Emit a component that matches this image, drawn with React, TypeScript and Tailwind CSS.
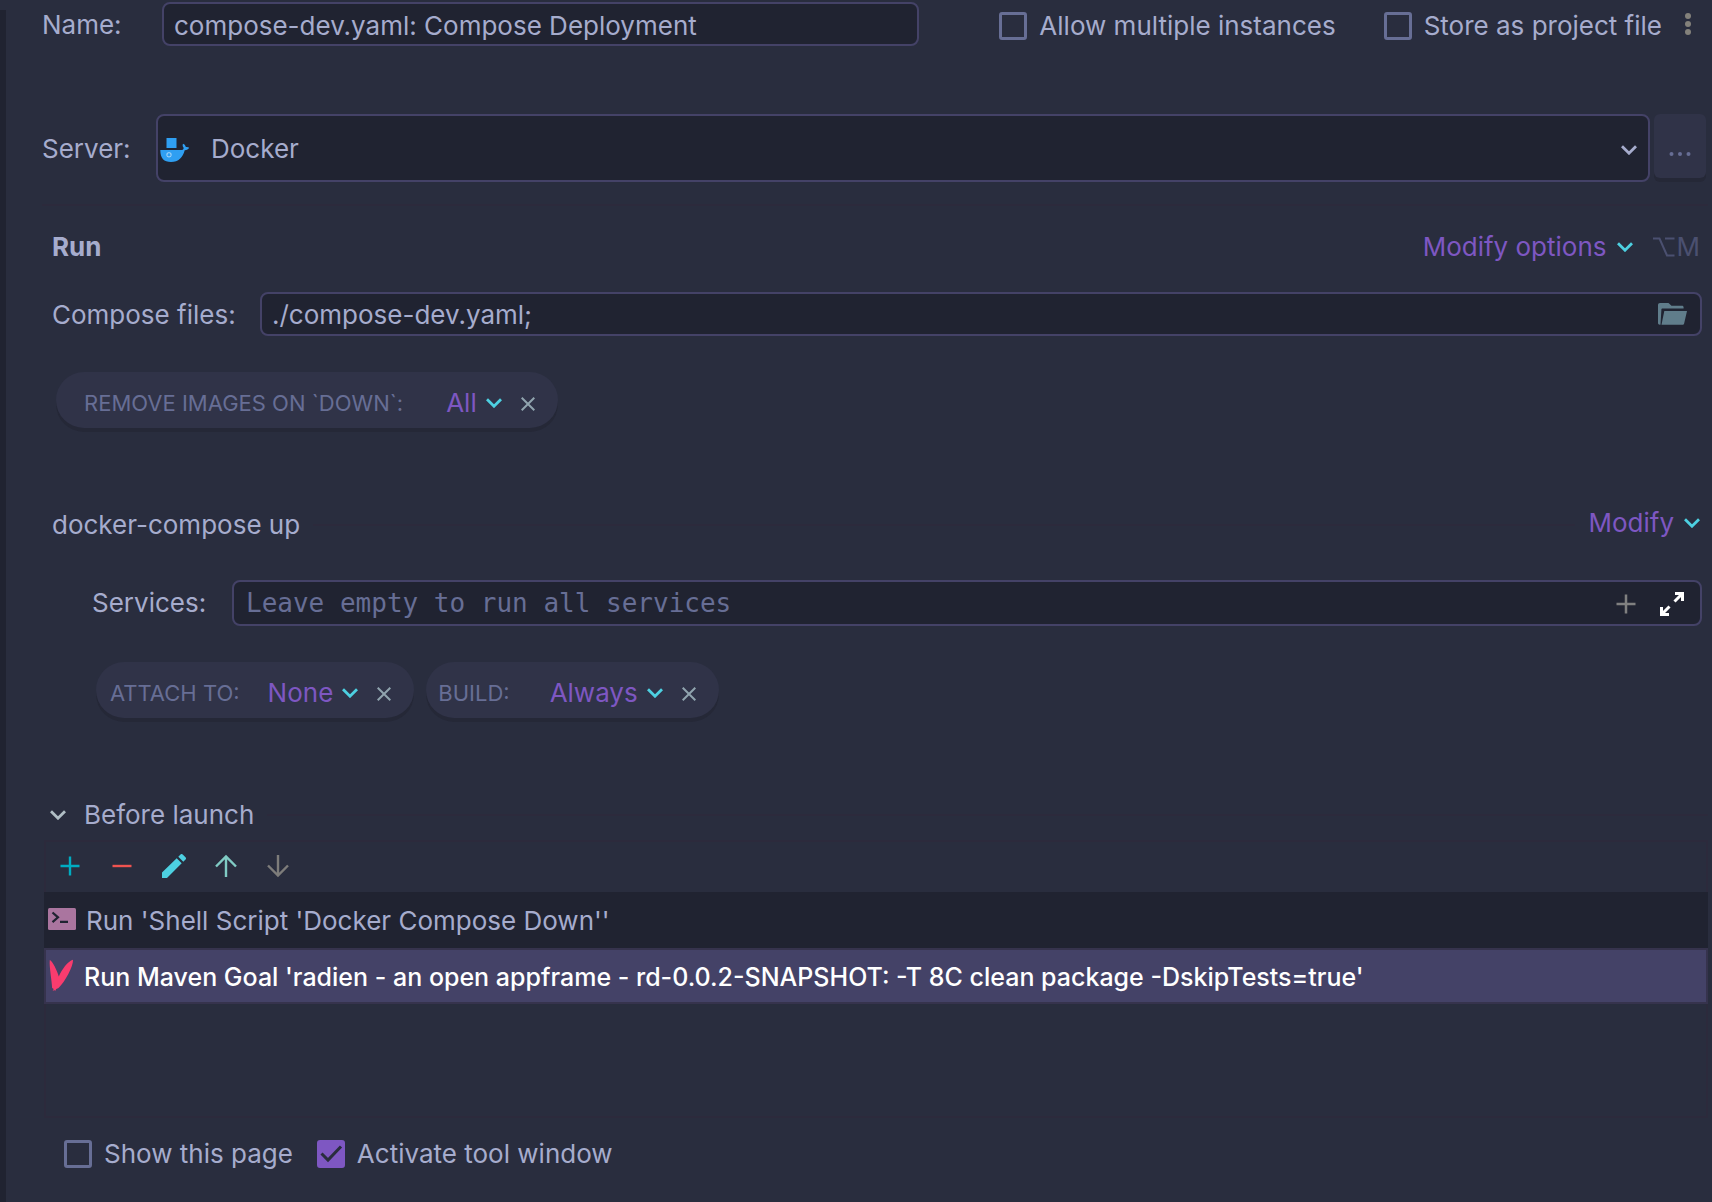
import type { ReactNode } from "react";

function Chevron({ className }: { className: string }) {
  return (
    <svg viewBox="0 0 16 10" className={`h-[10px] w-4 shrink-0 ${className}`} fill="none" stroke="currentColor" strokeWidth="2.800" aria-hidden="true">
      <path d="M1 1.200 8 8.200l7-7" />
    </svg>
  );
}

function CloseIcon() {
  return (
    <svg viewBox="0 0 14 14" className="h-[14px] w-[14px]" fill="none" stroke="currentColor" strokeWidth="2" aria-hidden="true">
      <path d="M.7.7l12.600 12.600M13.300.7.7 13.300" />
    </svg>
  );
}

function DockerIcon() {
  return (
    <svg viewBox="0 0 30 26" className="h-[26px] w-[30px]" aria-hidden="true">
      <path fill="#2f9ff2" d="M6.500 1h10v10h-10z" />
      <path fill="#2f9ff2" d="M.3 13H21c1.800 0 2.800-.8 2.600-2.300-1-1-1.200-2.400-.6-3.900 1.600.7 2.600 1.800 2.800 3.300 1.200-.4 2.200-.2 3.400.7-.9 1.500-2.300 2.400-4.500 2.500C23 20.500 18.500 25 11 25 4 25 .3 21.500 .3 13z" />
      <rect x="7" y="15.800" width="4" height="4" rx="1.200" fill="none" stroke="#b9defa" strokeWidth="1" />
    </svg>
  );
}

function FolderIcon() {
  return (
    <svg viewBox="0 0 29 22" className="h-[22px] w-[29px]" fill="#607d8b" aria-hidden="true">
      <path d="M2 0h8.500l3 2.800H24c1 0 1.600.6 1.600 1.500V5.500H4.500c-.7 0-1 .3-1.100 1L2.500 21.700H1.800C.7 21.700 0 21 0 20V2C0 .8.800 0 2 0z" />
      <path d="M6.300 8H29l-2.800 12.200c-.2 1-.9 1.500-1.900 1.500H3.500z" />
    </svg>
  );
}

function Checkbox({ id, label, checked = false }: { id: string; label: string; checked?: boolean }) {
  return (
    <div className="flex shrink-0 items-center gap-3">
      <span className="grid">
        <input
          id={id}
          type="checkbox"
          defaultChecked={checked}
          className="peer col-start-1 row-start-1 h-7 w-7 appearance-none rounded-[3px] border-3 border-[#676e95] checked:border-[#7e57c2] checked:bg-[#7e57c2]"
        />
        <svg viewBox="0 0 28 28" className="pointer-events-none invisible col-start-1 row-start-1 h-7 w-7 peer-checked:visible" fill="none" stroke="#292d3e" strokeWidth="3" aria-hidden="true">
          <path d="M4.500 13.500l6.500 6.500L24 6.500" />
        </svg>
      </span>
      <label htmlFor={id}>{label}</label>
    </div>
  );
}

function Chip({ label, value, className, valueClass }: { label: string; value: string; className: string; valueClass: string }) {
  return (
    <div className={`flex h-14 items-center rounded-full bg-[#303348] pt-1.5 pr-[23px] shadow-[0_4px_0_#252837] ${className}`}>
      <span className="text-[22px] text-[#676e95]">{label}</span>
      <button type="button" className={`flex items-center gap-[9px] text-[#7e57c2] ${valueClass}`}>
        {value}
        <Chevron className="text-[#4dd0e1]" />
      </button>
      <button type="button" aria-label={`Remove ${label}`} className="mt-0.5 ml-[19px] text-[#90a4ae]">
        <CloseIcon />
      </button>
    </div>
  );
}

function ToolButton({ label, color, children }: { label: string; color: string; children: ReactNode }) {
  return (
    <button type="button" aria-label={label} className={`grid h-7 w-7 place-items-center ${color}`}>
      <svg viewBox="0 0 24 24" className="h-6 w-6" fill="none" stroke="currentColor" strokeWidth="2.400" aria-hidden="true">
        {children}
      </svg>
    </button>
  );
}

const field = "border-2 border-[#444267] bg-[#202331] rounded-lg";

export default function App() {
  return (
    <div className="flex min-h-screen flex-col bg-[#292d3e] font-['Inter',sans-serif] text-[26px] leading-8 text-[#a6accd]">
      <div className="flex flex-1">
        <div className="mt-[10px] w-[6px] shrink-0 bg-[#202331]" />
        <main className="flex min-w-0 flex-1 flex-col pt-0.5 pl-9">
          <div className="flex items-center pr-[21px]">
            <label htmlFor="name" className="w-[120px] shrink-0 pt-0.5">Name:</label>
            <input id="name" defaultValue="compose-dev.yaml: Compose Deployment" className={`h-11 min-w-0 flex-1 px-[10px] pt-0.5 ${field}`} />
            <div className="ml-20 flex items-center gap-12 pt-1">
              <Checkbox id="multi" label="Allow multiple instances" />
              <Checkbox id="store" label="Store as project file" />
            </div>
            <button type="button" aria-label="Storage options" className="ml-[23px] text-[#83817b]">
              <svg viewBox="0 0 6 24" className="h-6 w-[6px]" fill="currentColor" aria-hidden="true">
                <circle cx="3" cy="4" r="3" />
                <circle cx="3" cy="12" r="3" />
                <circle cx="3" cy="20" r="3" />
              </svg>
            </button>
          </div>

          <div className="mt-[68px] flex items-center pr-[6px]">
            <label htmlFor="server" className="w-[114px] shrink-0 pt-0.5">Server:</label>
            <div className="relative min-w-0 flex-1">
              <select id="server" className={`h-[68px] w-full appearance-none pt-0.5 pl-[53px] ${field}`}>
                <option>Docker</option>
              </select>
              <span className="pointer-events-none absolute inset-y-0 left-1 flex items-center pt-1">
                <DockerIcon />
              </span>
              <span className="pointer-events-none absolute inset-y-0 right-[13px] flex items-center pt-1">
                <Chevron className="text-[#a6accd]" />
              </span>
            </div>
            <button type="button" aria-label="Configure server" className="mb-1 ml-1 grid h-16 w-[52px] place-items-center rounded-md bg-[#303348] pt-4 text-[#676e95] shadow-[0_4px_0_#252837]">
              <svg viewBox="0 0 22 4" className="h-1 w-[22px]" fill="currentColor" aria-hidden="true">
                <circle cx="2.500" cy="2" r="2" />
                <circle cx="11" cy="2" r="2" />
                <circle cx="19.500" cy="2" r="2" />
              </svg>
            </button>
          </div>

          <div className="mt-[22px] mr-1 h-0.5 bg-[#2c2a3c]" />

          <section className="pr-[10px] pl-[10px]">
            <div className="mt-[25px] flex items-center">
              <h2 className="font-bold">Run</h2>
              <button type="button" className="ml-auto flex items-center gap-[10px] text-[#7e57c2]">
                Modify options
                <Chevron className="text-[#4dd0e1]" />
              </button>
              <span className="mr-0.5 ml-5 flex items-center text-[#4b5070]">
                <svg viewBox="0 0 22 20" className="mr-0.5 h-5 w-[22px]" fill="none" stroke="currentColor" strokeWidth="2" aria-hidden="true">
                  <path d="M0 1.500h6.500l7.500 17h7.500M12 1.500h9.500" />
                </svg>
                M
              </span>
            </div>

            <div className="mt-[29px] flex items-center">
              <label htmlFor="files" className="w-[208px] shrink-0 pt-0.5">Compose files:</label>
              <div className={`flex h-11 min-w-0 flex-1 items-center pr-[13px] ${field}`}>
                <input id="files" defaultValue="./compose-dev.yaml;" className="h-full min-w-0 flex-1 bg-transparent pl-[10px]" />
                <button type="button" aria-label="Browse">
                  <FolderIcon />
                </button>
              </div>
            </div>

            <div className="mt-9 ml-1 flex">
              <Chip label="REMOVE IMAGES ON `DOWN`:" value="All" className="pl-7" valueClass="ml-[43px]" />
            </div>

            <div className="mt-[79px] flex items-center">
              <h3>docker-compose up</h3>
              <div className="mx-[13px] h-0.5 flex-1 bg-[#2c2a3c]" />
              <button type="button" className="mr-0.5 mb-1 flex items-center gap-[10px] text-[#7e57c2]">
                Modify
                <Chevron className="text-[#4dd0e1]" />
              </button>
            </div>

            <div className="mt-[37px] ml-10 flex items-center">
              <label htmlFor="services" className="w-[140px] shrink-0">Services:</label>
              <div className={`flex h-[46px] min-w-0 flex-1 items-center pr-4 ${field}`}>
                <input
                  id="services"
                  placeholder="Leave empty to run all services"
                  className="h-full min-w-0 flex-1 bg-transparent pl-3 font-['DejaVu_Sans_Mono',monospace] placeholder:text-[#676e95]"
                />
                <button type="button" aria-label="Add service" className="pt-0.5 text-[#808080]">
                  <svg viewBox="0 0 20 20" className="h-5 w-5" fill="none" stroke="currentColor" strokeWidth="2.500" aria-hidden="true">
                    <path d="M10 .5v19M.5 10h19" />
                  </svg>
                </button>
                <button type="button" aria-label="Expand" className="ml-6 pt-0.5 text-white">
                  <svg viewBox="0 0 24 24" className="h-6 w-6" fill="none" stroke="currentColor" strokeWidth="3" aria-hidden="true">
                    <path d="M15 1.500h7.500V9M22.500 1.500l-8 8M9 22.500H1.500V15M1.500 22.500l8-8" />
                  </svg>
                </button>
              </div>
            </div>

            <div className="mt-9 ml-11 flex gap-3">
              <Chip label="ATTACH TO:" value="None" className="pl-[14px]" valueClass="ml-7" />
              <Chip label="BUILD:" value="Always" className="pl-3" valueClass="ml-10" />
            </div>
          </section>

          <div className="mt-[81px] mr-1 flex items-center">
            <button type="button" className="ml-2 flex items-center gap-[18px]">
              <Chevron className="text-[#b0bec5]" />
              Before launch
            </button>
            <div className="ml-[13px] h-0.5 flex-1 bg-[#2c2a3c]" />
          </div>

          <div className="mt-[9px] mr-1 ml-0.5 flex flex-col border-2 border-[#2c2a3c]">
            <div className="flex h-[50px] items-center gap-6 pb-0.5 pl-[10px]">
              <ToolButton label="Add" color="text-[#00acc1]">
                <path d="M12 2.500v19M2.500 12h19" />
              </ToolButton>
              <ToolButton label="Remove" color="text-[#ef5350]">
                <path d="M2.500 12h19" />
              </ToolButton>
              <ToolButton label="Edit" color="text-[#4dd0e1]">
                <path fill="currentColor" stroke="none" d="M0 18.500 14.700 4.200l5 5L5 24H0zM16.300 2.700 18.500.5c.7-.7 1.500-.7 2.200 0l2.800 2.800c.7.7.7 1.500 0 2.200l-2.200 2.200z" />
              </ToolButton>
              <ToolButton label="Move up" color="text-[#80cbc4]">
                <path d="M12 23V3M2 12.500l10-10 10 10" />
              </ToolButton>
              <ToolButton label="Move down" color="text-[#7d7c7a]">
                <path d="M12 1v20M2 11.500l10 10 10-10" />
              </ToolButton>
            </div>
            <ul className="-mx-0.5">
              <li className="flex h-14 items-center gap-[10px] bg-[#202331] pt-0.5 pl-1">
                <svg viewBox="0 0 28 22" className="mb-1 h-[22px] w-7" aria-hidden="true">
                  <rect width="28" height="22" rx="1.500" fill="#aa759f" />
                  <path d="M4.500 4.500l5.500 4.800-5.500 4.800M12 13.800h8" fill="none" stroke="#202331" strokeWidth="2.200" />
                </svg>
                Run 'Shell Script 'Docker Compose Down''
              </li>
              <li className="flex h-14 items-center gap-[10px] border-2 border-[#36334d] bg-[#444267] pt-0.5 pl-[3px] text-[25px] font-medium text-white">
                <svg viewBox="0 0 25 32" className="mb-1 h-8 w-[25px]" fill="#f93c6e" aria-hidden="true">
                  <path d="M.8 1C3.500 2 8.300 12 9.800 17.500 12.500 11 19 2 24 .8 24.500 7 16 23 9.500 29l-2.700 1.300.3 1.200-1.600-.3-1.900.6 1.200-1.800-1.700-1C3 22 0 8 .8 1z" />
                </svg>
                Run Maven Goal 'radien - an open appframe - rd-0.0.2-SNAPSHOT: -T 8C clean package -DskipTests=true'
              </li>
            </ul>
            <div className="h-[112px]" />
          </div>

          <div className="mt-5 ml-[22px] flex gap-6">
            <Checkbox id="show" label="Show this page" />
            <Checkbox id="activate" label="Activate tool window" checked />
          </div>
        </main>
      </div>
    </div>
  );
}
